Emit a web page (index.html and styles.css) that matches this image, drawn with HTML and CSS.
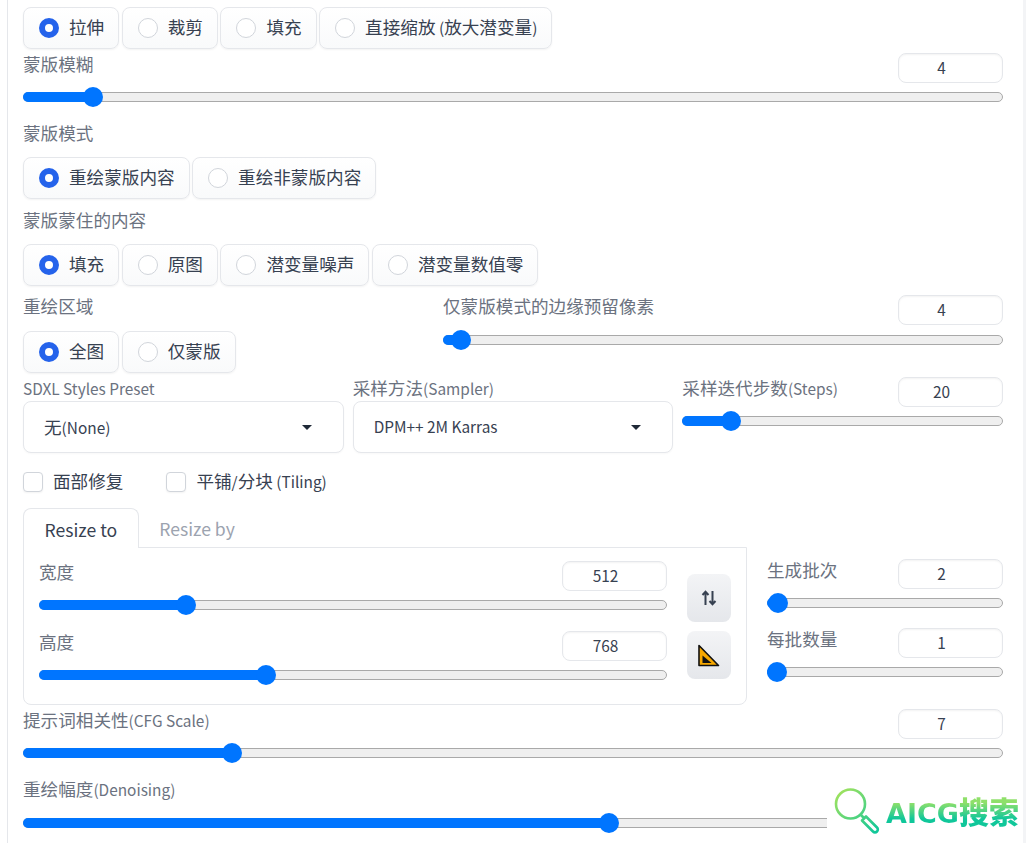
FILE: index.html
```html
<!DOCTYPE html>
<html lang="zh">
<head>
<meta charset="utf-8">
<title>img2img</title>
<link rel="stylesheet" href="styles.css">
</head>
<body>
<main class="page">
  <div class="radios">
    <label class="radio on"><i></i>拉伸</label>
    <label class="radio"><i></i>裁剪</label>
    <label class="radio"><i></i>填充</label>
    <label class="radio"><i></i><span>直接缩放<span class="la"> (</span>放大潜变量<span class="la">)</span></span></label>
  </div>
  <section class="slider s-blur">
    <div class="head"><span class="lbl">蒙版模糊</span><span class="num">4</span></div>
    <div class="track"><div class="fill" style="width:7.2%"></div></div>
  </section>
  <div class="lbl gl g1">蒙版模式</div>
  <div class="radios">
    <label class="radio on"><i></i>重绘蒙版内容</label>
    <label class="radio"><i></i>重绘非蒙版内容</label>
  </div>
  <div class="lbl gl g2">蒙版蒙住的内容</div>
  <div class="radios">
    <label class="radio on"><i></i>填充</label>
    <label class="radio"><i></i>原图</label>
    <label class="radio"><i></i>潜变量噪声</label>
    <label class="radio"><i></i>潜变量数值零</label>
  </div>
  <div class="inpaint">
    <div class="area">
      <div class="lbl area-lbl">重绘区域</div>
      <div class="radios">
        <label class="radio on"><i></i>全图</label>
        <label class="radio"><i></i>仅蒙版</label>
      </div>
    </div>
    <section class="slider pad">
      <div class="head"><span class="lbl">仅蒙版模式的边缘预留像素</span><span class="num">4</span></div>
      <div class="track"><div class="fill" style="width:3.2%"></div></div>
    </section>
  </div>
  <div class="sampler">
    <div class="drop-col">
      <div class="lbl la">SDXL Styles Preset</div>
      <div class="drop"><span>无<span class="la">(None)</span></span><b></b></div>
    </div>
    <div class="drop-col">
      <div class="lbl">采样方法<span class="la">(Sampler)</span></div>
      <div class="drop"><span class="la">DPM++ 2M Karras</span><b></b></div>
    </div>
    <section class="slider steps">
      <div class="head"><span class="lbl">采样迭代步数<span class="la">(Steps)</span></span><span class="num">20</span></div>
      <div class="track"><div class="fill" style="width:15.3%"></div></div>
    </section>
  </div>
  <div class="checks">
    <label class="check"><i></i>面部修复</label>
    <label class="check"><i></i><span>平铺<span class="la">/</span>分块<span class="la"> (Tiling)</span></span></label>
  </div>
  <div class="resize">
    <div class="tabs-wrap">
      <div class="tabs">
        <span class="tab active">Resize to</span>
        <span class="tab">Resize by</span>
      </div>
      <div class="panel">
        <div class="dims">
          <section class="slider dim">
            <div class="head"><span class="lbl">宽度</span><span class="num">512</span></div>
            <div class="track"><div class="fill" style="width:23.5%"></div></div>
          </section>
          <section class="slider dim dim2">
            <div class="head"><span class="lbl">高度</span><span class="num">768</span></div>
            <div class="track"><div class="fill" style="width:36.2%"></div></div>
          </section>
        </div>
        <div class="btns">
          <button class="tool" aria-label="swap">
            <svg width="16" height="16" viewBox="0 0 16 16" fill="none" stroke="#374151" stroke-width="2"><path d="M4.5 15V2M1.5 5l3-3.2 3 3.2M11.5 1v13M8.5 11l3 3.2 3-3.2"/></svg>
          </button>
          <button class="tool" aria-label="ruler">
            <svg width="24" height="24" viewBox="0 0 24 24"><path d="M2 2.5 21.5 22.5H2Z" fill="#f7a800" stroke="#111" stroke-width="1.6" stroke-linejoin="round"/><path d="M5.5 12.5 14.5 20H5.5Z" fill="#111"/></svg>
          </button>
        </div>
      </div>
    </div>
    <div class="batch">
      <section class="slider bt">
        <div class="head"><span class="lbl">生成批次</span><span class="num">2</span></div>
        <div class="track"><div class="fill" style="width:4.9%"></div></div>
      </section>
      <section class="slider bt bt2">
        <div class="head"><span class="lbl">每批数量</span><span class="num">1</span></div>
        <div class="track"><div class="fill" style="width:4.2%"></div></div>
      </section>
    </div>
  </div>
  <section class="slider cfg">
    <div class="head"><span class="lbl">提示词相关性<span class="la">(CFG Scale)</span></span><span class="num">7</span></div>
    <div class="track"><div class="fill" style="width:21.4%"></div></div>
  </section>
  <section class="slider den">
    <div class="head"><span class="lbl">重绘幅度<span class="la">(Denoising)</span></span></div>
    <div class="track"><div class="fill" style="width:59.9%"></div></div>
  </section>
</main>
<div class="mark">
  <svg width="46" height="46" viewBox="0 0 46 46" fill="none">
    <defs><linearGradient id="g" gradientUnits="userSpaceOnUse" x1="4" y1="2" x2="42" y2="44"><stop offset="0" stop-color="#a4e35c"/><stop offset="1" stop-color="#10c79a"/></linearGradient></defs>
    <circle cx="16.5" cy="16" r="14.5" stroke="url(#g)" stroke-width="2.6"/>
    <path d="M26.5 26.5l3 3M28 32.5l4-4 11 11a2.8 2.8 0 0 1-4 4Z" stroke="url(#g)" stroke-width="2.6" stroke-linejoin="round"/>
  </svg>
  <span class="mark-text"><span class="mark-latin">AICG</span>搜索</span>
</div>
</body>
</html>
```
FILE: styles.css
```css
* { box-sizing: border-box; }
html, body { margin: 0; height: 843px; overflow: hidden; background: #fff; }
body {
  font-family: "Noto Sans CJK SC", "Noto Sans", sans-serif;
  color: #374151;
  font-size: 17.6px;
  position: relative;
}
.la { font-size: 15.4px; }
.page {
  margin-left: 7px;
  width: 996px;
  height: 843px;
  padding: 7px 0 0 15px;
  border-left: 1px solid #e5e7eb;
}
body::after {
  content: "";
  position: absolute;
  top: 0; right: 0; bottom: 0;
  width: 3px;
  background: #f3f4f6;
}
.radios { display: flex; gap: 2.5px; height: 42px; }
.radio {
  display: flex;
  align-items: center;
  gap: 10px;
  padding: 0 14px 2px 15px;
  border: 1px solid #e5e7eb;
  border-radius: 8px;
  background: linear-gradient(#fff, #f9fafb);
  box-shadow: 0 1px 2px rgba(0,0,0,.05);
  line-height: 20px;
  white-space: nowrap;
}
.radio i {
  width: 20px; height: 20px;
  margin-top: 2px;
  border-radius: 50%;
  border: 1px solid #d1d5db;
  background: #fff;
  flex: none;
}
.radio.on i { border: 6px solid #2563eb; }
.lbl { color: #6b7280; line-height: 22px; white-space: nowrap; }
.gl { height: 22px; }
.g1 { margin-top: 20px; margin-bottom: 13px; }
.g2 { margin-top: 10px; margin-bottom: 13px; }

.slider { display: block; }
.head { display: flex; justify-content: space-between; align-items: flex-start; height: 30px; }
.num {
  width: 105px; height: 30px;
  border: 1px solid #e5e7eb;
  border-radius: 8px;
  background: #fff;
  box-shadow: inset 0 1px 2px rgba(0,0,0,.05);
  text-align: center;
  font-size: 15.4px;
  line-height: 26px;
  color: #374151;
  padding-right: 18px;
}
.track {
  position: relative;
  height: 10px;
  margin-top: 9px;
  border: 1px solid #a9a9a9;
  border-radius: 6px;
  background: #efefef;
}
.fill {
  position: absolute;
  left: -1px; top: -1px;
  height: 10px;
  background: #0075ff;
  border-radius: 6px 0 0 6px;
}
.fill::after {
  content: "";
  position: absolute;
  right: -10px; top: -5px;
  width: 20px; height: 20px;
  border-radius: 50%;
  background: #0075ff;
}
.s-blur { margin-top: 4px; }

.inpaint { display: flex; margin-top: 9px; height: 78px; }
.area { width: 420px; }
.area-lbl { height: 22px; margin-bottom: 14px; }
.pad { flex: 1; }
.pad .track { margin-top: 10px; }

.sampler { display: flex; gap: 9px; margin-top: 4px; }
.drop-col { width: 320.67px; }
.drop-col .lbl { height: 22px; display: block; }
.drop {
  margin-top: 2px;
  height: 52px;
  border: 1px solid #e5e7eb;
  border-radius: 8px;
  background: #fff;
  display: flex;
  align-items: center;
  justify-content: space-between;
  padding: 0 31px 2px 20px;
  box-shadow: 0 1px 2px rgba(0,0,0,.03);
}
.drop b {
  width: 0; height: 0;
  margin-top: 2px;
  border-left: 5px solid transparent;
  border-right: 5px solid transparent;
  border-top: 5px solid #1f2937;
}
.steps { flex: 1; }

.checks { display: flex; gap: 43px; margin-top: 18px; height: 22px; align-items: center; }
.check { display: flex; align-items: center; gap: 10px; line-height: 22px; padding-bottom: 2px; }
.check i {
  width: 20px; height: 20px;
  margin-top: 2px;
  border: 1px solid #d1d5db;
  border-radius: 4px;
  background: #fff;
  box-shadow: 0 1px 2px rgba(0,0,0,.05);
}

.resize { display: flex; gap: 20px; margin-top: 15px; }
.tabs-wrap { width: 724px; }
.tabs { display: flex; height: 40px; }
.tab {
  padding: 0 20.5px;
  line-height: 42px;
  color: #9ca3af;
  white-space: nowrap;
}
.tab.active {
  color: #374151;
  border: 1px solid #e5e7eb;
  border-bottom: 0;
  border-radius: 8px 8px 0 0;
  background: #fff;
  position: relative;
  z-index: 1;
  height: 40px;
}
.panel {
  display: flex;
  gap: 20px;
  height: 158px;
  margin-top: -1px;
  padding: 13px 15px 0 15px;
  border: 1px solid #e5e7eb;
  border-radius: 0 0 8px 8px;
}
.dims { width: 628px; }
.dim2 { margin-top: 21px; }
.btns { display: flex; flex-direction: column; gap: 9px; padding-top: 13px; }
.tool {
  width: 44px; height: 48px;
  padding: 0;
  border: 0;
  border-radius: 8px;
  background: linear-gradient(#f3f4f6, #e5e7eb);
  display: flex;
  align-items: center;
  justify-content: center;
}
.batch { flex: 1; padding-top: 51px; }
.bt2 { margin-top: 20px; }
.cfg { margin-top: 4px; }
.den { margin-top: 20px; }
.den .track { margin-top: 10px; }

.mark {
  position: absolute;
  left: 827px; top: 778px;
  width: 199px; height: 65px;
  background: #fff;
  display: flex;
  align-items: flex-start;
  gap: 6px;
  padding: 10px 0 0 7px;
}
.mark-text {
  font-size: 30px;
  font-weight: 900;
  line-height: 42px;
  margin-top: 1px;
  background: linear-gradient(#8fe06a 30%, #10c79a 65%);
  -webkit-background-clip: text;
  background-clip: text;
  color: transparent;
  white-space: nowrap;
}
.mark-latin {
  font-family: "DejaVu Sans", sans-serif;
  font-weight: 700;
  font-size: 27px;
}
```
